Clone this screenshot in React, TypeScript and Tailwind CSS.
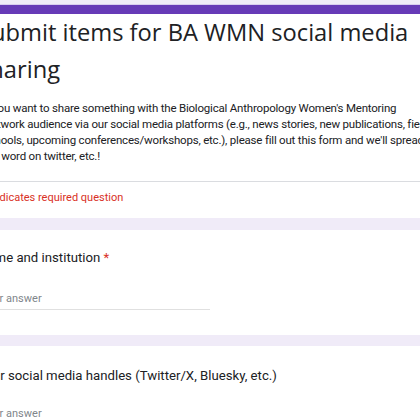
import React from "react";

const App: React.FC = () => {
  return (
    <div className="w-[420px] h-[420px] overflow-hidden bg-[#f0ebf8]">
      <div className="-ml-[46px] w-[540px] pt-[4px]" style={{ fontFamily: "Roboto, sans-serif" }}>
        {/* Header card */}
        <div className="bg-white">
          <div className="h-[1px] bg-[#d9cdef]"></div>
          <div className="h-[9px] bg-[#673ab7]"></div>
          <div className="pl-[24px] pb-[17px]">
            <h1
              className="text-[23.7px] leading-[37px] text-[#202124] whitespace-nowrap"
              style={{ fontFamily: "'Open Sans', sans-serif" }}
            >
              <span className="block">Submit items for BA WMN social media</span>
              <span className="block">sharing</span>
            </h1>
            <div className="mt-[12px] pl-[5px] text-[11.5px] leading-[16px] tracking-[-0.2px] text-[#202124] whitespace-nowrap">
              <span className="block">If you want to share something with the Biological Anthropology Women's Mentoring</span>
              <span className="block">Network audience via our social media platforms (e.g., news stories, new publications, field</span>
              <span className="block">schools, upcoming conferences/workshops, etc.), please fill out this form and we'll spread</span>
              <span className="block">the word on twitter, etc.!</span>
            </div>
          </div>
          <div className="h-[1px] bg-[#dadce0]"></div>
          <div className="pl-[29px] pt-[7px] pb-[11px] text-[11px] leading-[18px] text-[#d93025]">
            * Indicates required question
          </div>
        </div>

        {/* Question 1 */}
        <div className="mt-[12px] bg-white pl-[24px] pt-[17px] pb-[25px]">
          <div className="text-[13.2px] leading-[22px] text-[#202124]">
            Name and institution <span className="text-[#d93025]">*</span>
          </div>
          <div className="mt-[22px] w-[232px] border-b border-[#e0e0e0] pb-[2px] pl-[3px] text-[11px] leading-[16px] text-[#80868b]">
            Your answer
          </div>
        </div>

        {/* Question 2 */}
        <div className="mt-[11px] bg-white pl-[24px] pt-[19px] pb-[25px]">
          <div className="text-[13.2px] leading-[22px] text-[#202124]">
            Your social media handles (Twitter/X, Bluesky, etc.)
          </div>
          <div className="mt-[19px] w-[232px] border-b border-[#e0e0e0] pb-[2px] pl-[3px] text-[11px] leading-[16px] text-[#80868b]">
            Your answer
          </div>
        </div>
      </div>
    </div>
  );
};

export default App;
